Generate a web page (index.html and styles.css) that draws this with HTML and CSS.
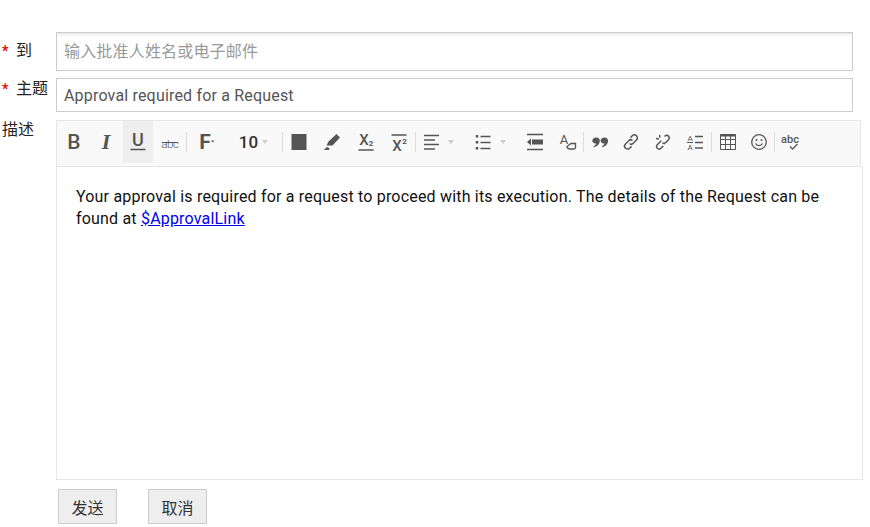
FILE: index.html
```html
<!DOCTYPE html>
<html lang="zh">
<head>
<meta charset="utf-8">
<title>Approval</title>
<link rel="stylesheet" href="styles.css">
</head>
<body>
<form class="form">
  <div class="row row-to">
    <label class="label"><span class="req">*</span>到</label>
    <input class="field field-to" type="text" placeholder="输入批准人姓名或电子邮件">
  </div>
  <div class="row row-subject">
    <label class="label label-subject"><span class="req">*</span>主题</label>
    <input class="field field-subject" type="text" value="Approval required for a Request">
  </div>
  <div class="row row-desc">
    <label class="label label-desc">描述</label>
    <div class="editor">
      <div class="toolbar">
        <span class="btn"><svg width="24" height="24" viewBox="0 0 24 24"><text x="12" y="18.500" class="gl gb" text-anchor="middle">B</text></svg></span>
        <span class="btn"><svg width="24" height="24" viewBox="0 0 24 24"><text x="12" y="18.500" class="gl gi" text-anchor="middle">I</text></svg></span>
        <span class="btn btn-on"><svg width="24" height="24" viewBox="0 0 24 24"><text x="12" y="16" class="gl gu" text-anchor="middle">U</text><path d="M4.500 19.500h15" class="st st15"/></svg></span>
        <span class="btn"><svg width="24" height="24" viewBox="0 0 24 24"><text x="12" y="17.500" class="gl gs" text-anchor="middle">abc</text><path d="M4 12.500h16" class="st st1"/></svg></span>
        <span class="sep"></span>
        <span class="btn w-font"><svg width="24" height="24" viewBox="0 0 24 24"><text x="9" y="19" class="gl gf" text-anchor="middle">F</text><path d="M15 10.500h3.500l-1.750 2z" class="fl"/></svg></span>
        <span class="btn w-size"><span class="size">10</span><i class="caret"></i></span>
        <span class="sep"></span>
        <span class="btn"><svg width="24" height="24" viewBox="0 0 24 24"><rect x="4.500" y="4" width="15" height="16" class="fl"/></svg></span>
        <span class="btn w-34"><svg width="24" height="24" viewBox="0 0 24 24"><path d="M6.500 15.500l2-4 8-7.500 3.500 3.500-7.500 8zM4 20c1-1.500 2-2.500 3.500-3l2 1.500-.5 1.500z" class="fl"/></svg></span>
        <span class="btn w-34"><svg width="24" height="24" viewBox="0 0 24 24"><text x="10" y="14.500" class="gl gx" text-anchor="middle">X</text><text x="17" y="16" class="gl gsm" text-anchor="middle">2</text><path d="M4.500 20h15" class="st st15"/></svg></span>
        <span class="btn w-32"><svg width="24" height="24" viewBox="0 0 24 24"><path d="M4.500 5h15" class="st st15"/><text x="10" y="20.500" class="gl gx" text-anchor="middle">X</text><text x="17.500" y="14" class="gl gsm" text-anchor="middle">2</text></svg></span>
        <span class="sep"></span>
        <span class="btn w-align"><svg width="24" height="24" viewBox="0 0 24 24"><path d="M4 5.500h15M4 10h11M4 14.500h15M4 19h11" class="st st15"/></svg><i class="caret"></i></span>
        <span class="btn w-list"><svg width="24" height="24" viewBox="0 0 24 24"><path d="M5 5v2.500M5 11v2.500M5 17v2.500" class="st st25"/><path d="M8.500 6.500h10M8.500 12.500h10M8.500 18.500h10" class="st st15"/></svg><i class="caret"></i></span>
        <span class="btn w-out"><svg width="24" height="24" viewBox="0 0 24 24"><path d="M4 4.500h16M4 19.500h16" class="st st15"/><path d="M4 12l4-3.500v7z" class="fl"/><rect x="9" y="9.500" width="11" height="5" class="fl"/></svg></span>
        <span class="btn w-a"><svg width="24" height="24" viewBox="0 0 24 24"><text x="9" y="14" class="gl gaa" text-anchor="middle">A</text><path d="M12 16.500l4-3h4.500v4c0 1-.5 1.500-1.500 1.500h-4.500c-1.500 0-3-1.500-2.500-2.500z" class="ol"/><path d="M12 16.500l3 2.500h-1c-1 0-2-1.500-2-2.500z" class="fl"/></svg></span>
        <span class="sep"></span>
        <span class="btn w-q"><svg width="24" height="24" viewBox="0 0 24 24"><g transform="translate(12 12) scale(1.150) translate(-13 -12)"><path d="M9.800 8c2 0 3 1.300 3 3 0 3-2.300 5-5 5.500l-.4-1c1.300-.5 2.200-1.300 2.300-2.300-2 .3-3.400-.9-3.400-2.500C6.300 9.200 7.800 8 9.800 8zM17 8c2 0 3 1.300 3 3 0 3-2.300 5-5 5.500l-.4-1c1.300-.5 2.200-1.300 2.300-2.300-2 .3-3.400-.9-3.400-2.500 0-1.500 1.500-2.700 3.500-2.700z" class="fl"/></g></svg></span>
        <span class="btn w-32"><svg width="24" height="24" viewBox="0 0 24 24"><path d="M10.500 13.500c1 1 2.500 1 3.500 0l3.500-3.500c1.200-1.200 1.200-3 0-4.200s-3-1.200-4.200 0l-1.800 1.800M13.500 10.500c-1-1-2.500-1-3.500 0L6.500 14c-1.200 1.200-1.200 3 0 4.200s3 1.200 4.200 0l1.800-1.800" class="st st15"/></svg></span>
        <span class="btn w-32"><svg width="24" height="24" viewBox="0 0 24 24"><path d="M13.500 6.500c1.200-1.200 2.900-1.500 4-.4s1 2.700-.2 3.900l-2.500 2.500c-1 1-2.300 1-3.300.4M10.500 11c-.3-.1-.7.2-1 .5l-3 3c-1.200 1.200-1.300 2.800-.2 3.800s2.800.9 4-.3l2-2M13 14c.5-.4 1-1 .5-1.500M5 8.500l3 .5M8.500 5l.5 2.500" class="st st15"/></svg></span>
        <span class="btn w-32"><svg width="24" height="24" viewBox="0 0 24 24"><text x="7" y="11" class="gl gt" text-anchor="middle">A</text><text x="7" y="20" class="gl gt" text-anchor="middle">A</text><path d="M12 6.500h8M12 12.500h8M12 18h8" class="st st15"/><path d="M4 12.500h6" class="st st1"/></svg></span>
        <span class="sep"></span>
        <span class="btn w-31"><svg width="24" height="24" viewBox="0 0 24 24"><path d="M4.500 4.500h15v15h-15zM4.500 9.500h15M4.500 14.500h15M9.500 5v14.500M14.500 5v14.500" class="st st1"/><path d="M4 5.500h16" class="st st2"/></svg></span>
        <span class="btn w-31"><svg width="24" height="24" viewBox="0 0 24 24"><circle cx="12" cy="12" r="7.300" class="st st13"/><circle cx="9.500" cy="10" r="1" class="fl"/><circle cx="14.500" cy="10" r="1" class="fl"/><path d="M8.500 13.500c1.500 2.700 5.500 2.700 7 0" class="st st13"/></svg></span>
        <span class="sep"></span>
        <span class="btn w-32"><svg width="24" height="24" viewBox="0 0 24 24"><text x="11" y="13" class="gl gc" text-anchor="middle">abc</text><path d="M11 16.500l2.500 2.500 5-5" class="st st13"/></svg></span>
      </div>
      <div class="content">Your approval is required for a request to proceed with its execution. The details of the Request can be found at <a href="#" class="link">$ApprovalLink</a></div>
    </div>
  </div>
  <div class="actions">
    <button type="button" class="action">发送</button>
    <button type="button" class="action">取消</button>
  </div>
</form>
</body>
</html>
```
FILE: styles.css
```css
* { box-sizing: border-box; }
html, body { margin: 0; padding: 0; background: #fff; overflow: hidden; }
body { font-family: Roboto, "Noto Sans CJK SC", sans-serif; font-size: 16px; color: #222; }

.form { padding-top: 32px; width: 870px; height: 527px; }
.row { display: flex; align-items: flex-start; }
.row-to { height: 39px; margin-bottom: 7px; }
.row-subject { height: 34px; margin-bottom: 8px; }

.label { flex: 0 0 56px; padding-left: 2px; line-height: 22px; white-space: nowrap; color: #222; display: block; }
.row-to .label { padding-top: 8px; }
.label-subject { padding-top: 0; margin-top: 0; }
.label-desc { padding-top: 0; margin-top: -1px; }
.req { display: inline-block; width: 14px; color: #e00; font-size: 14px; font-weight: 700; }

.field { font: 16px/22px Roboto, "Noto Sans CJK SC", sans-serif; letter-spacing: .18px; width: 797px; border: 1px solid #ccc; padding: 0 7px; color: #555; background: #fff; outline: none; border-radius: 0; }
.field::placeholder { color: #999; opacity: 1; }
.field-to { height: 39px; box-shadow: inset 0 3px 3px -1px rgba(0,0,0,.09); }
.field-subject { height: 34px; }

.editor { width: 807px; }
.toolbar { width: 805px; height: 46px; background: #f9f9f9; border: 1px solid #e6e6e6; border-bottom: 0; display: flex; align-items: flex-start; padding-left: 1px; }
.btn { flex: 0 0 32px; width: 32px; height: 42px; display: flex; align-items: center; justify-content: center; }
.btn-on { background: #eee; flex-basis: 30px; width: 30px; margin: 0 1px; }
.sep { flex: 0 0 1px; width: 1px; height: 20px; margin-top: 11px; background: #ddd; }
.w-font { flex-basis: 42px; width: 42px; }
.w-size { flex-basis: 53px; width: 53px; padding-right: 4px; }
.w-34 { flex-basis: 34px; width: 34px; }
.w-32 { flex-basis: 32px; width: 32px; }
.w-31 { flex-basis: 31px; width: 31px; }
.w-align { flex-basis: 51px; width: 51px; justify-content: flex-start; padding-left: 4px; }
.w-list { flex-basis: 52px; width: 52px; justify-content: flex-start; padding-left: 5px; }
.w-out { flex-basis: 32px; width: 32px; }
.w-a { flex-basis: 32px; width: 32px; }
.w-q { flex-basis: 31px; width: 31px; }

.size { font-size: 17px; font-weight: 500; color: #333; }
.caret { display: inline-block; width: 0; height: 0; margin-left: 4px; border-left: 3.500px solid transparent; border-right: 3.500px solid transparent; border-top: 4px solid #ccc; }

.gl { font-family: Roboto, sans-serif; fill: #555; }
.gb { font-size: 21px; font-weight: 500; }
.gi { font-family: "Liberation Serif", serif; font-size: 22px; font-style: italic; font-weight: 700; }
.gu { font-size: 18px; font-weight: 500; }
.gs { font-size: 11.500px; letter-spacing: -.4px; font-weight: 300; }
.gf { font-size: 21px; font-weight: 700; }
.gx { font-size: 15px; font-weight: 500; }
.gsm { font-size: 8px; font-weight: 700; }
.gaa { font-size: 13px; }
.gt { font-size: 8px; }
.gc { font-size: 11px; font-weight: 500; }
.st { fill: none; stroke: #555; }
.st1 { stroke-width: 1; }
.st13 { stroke-width: 1.300; }
.st15 { stroke-width: 1.500; }
.st2 { stroke-width: 2; }
.st25 { stroke-width: 2.500; }
.fl { fill: #555; }
.ol { fill: none; stroke: #555; stroke-width: 1.300; }

.content { height: 314px; width: 807px; border: 1px solid #e6e6e6; padding: 19px 19px 0; font-size: 16px; letter-spacing: .19px; line-height: 22px; color: #111; background: #fff; }
.link { color: #00e; text-decoration: underline; }

.actions { display: flex; gap: 31px; margin: 9px 0 0 58px; }
.action { width: 59px; height: 35px; padding: 0; background: #eee; border: 1px solid #ccc; font: 16px Roboto, "Noto Sans CJK SC", sans-serif; color: #333; border-radius: 0; }
```
